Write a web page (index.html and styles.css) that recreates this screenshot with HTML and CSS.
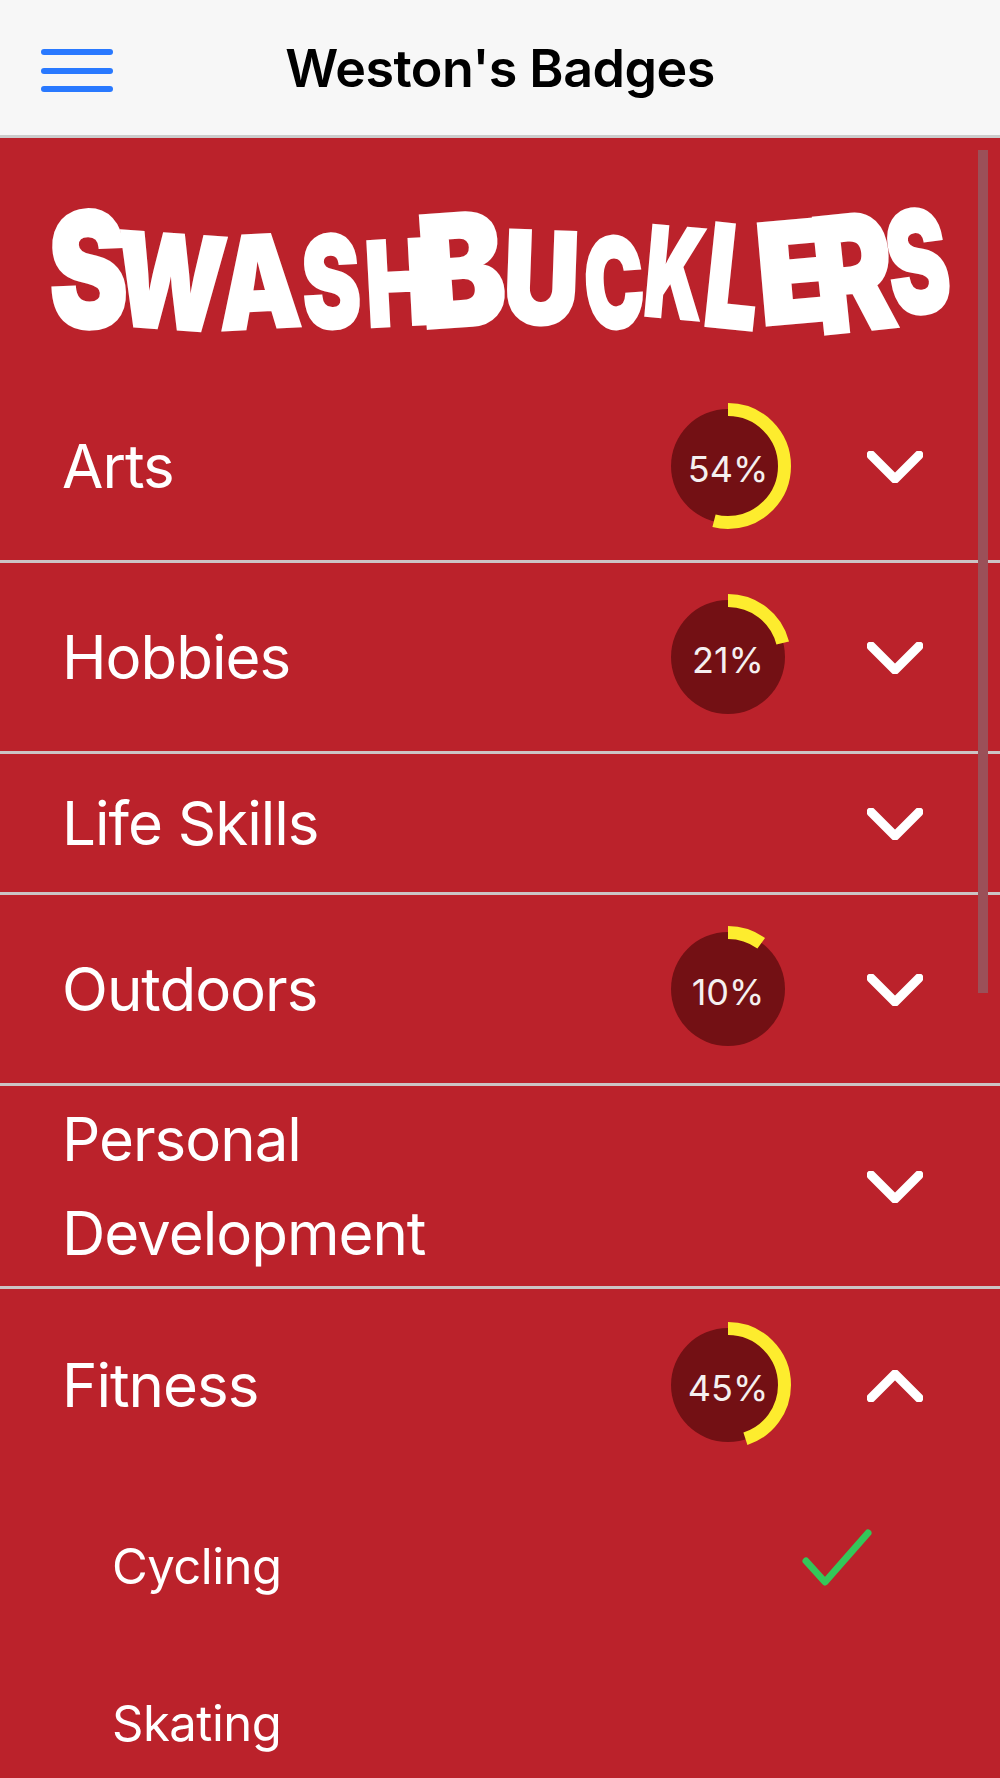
FILE: index.html
```html
<!DOCTYPE html>
<html lang="en">

<head>
     <meta charset="UTF-8">
     <meta name="viewport" content="width=device-width, initial-scale=1.0">
     <title>Weston's Badges</title>
     <link rel="stylesheet" href="styles.css">
</head>

<body>

     <header class="top-bar">
          <button class="menu-btn" aria-label="Menu">
               <span></span>
               <span></span>
               <span></span>
          </button>
          <h1 class="top-title">Weston's Badges</h1>
     </header>

     <main class="content">
          <div class="scroll-thumb"></div>

          <div class="logo" aria-label="Swashbucklers">
               <span class="letter l1">S</span><span class="letter l2">W</span><span class="letter l3">A</span><span class="letter l4">S</span><span class="letter l5">H</span><span class="letter l6">B</span><span class="letter l7">U</span><span class="letter l8">C</span><span class="letter l9">K</span><span class="letter l10">L</span><span class="letter l11">E</span><span class="letter l12">R</span><span class="letter l13">S</span>
          </div>

          <div class="category">
               <span class="category-name">Arts</span>
               <div class="ring">
                    <svg viewBox="0 0 126 126" width="126" height="126">
                         <circle class="ring-bg" cx="63" cy="63" r="57"></circle>
                         <circle class="ring-arc" cx="63" cy="63" r="56.5" pathLength="100" stroke-dasharray="54 100"></circle>
                    </svg>
                    <span class="ring-label">54%</span>
               </div>
               <svg class="chevron" viewBox="0 0 56 32" width="56" height="32">
                    <path d="M4 4 L28 28 L52 4"></path>
               </svg>
          </div>

          <div class="category">
               <span class="category-name">Hobbies</span>
               <div class="ring">
                    <svg viewBox="0 0 126 126" width="126" height="126">
                         <circle class="ring-bg" cx="63" cy="63" r="57"></circle>
                         <circle class="ring-arc" cx="63" cy="63" r="56.5" pathLength="100" stroke-dasharray="21 100"></circle>
                    </svg>
                    <span class="ring-label">21%</span>
               </div>
               <svg class="chevron" viewBox="0 0 56 32" width="56" height="32">
                    <path d="M4 4 L28 28 L52 4"></path>
               </svg>
          </div>

          <div class="category category-short">
               <span class="category-name">Life Skills</span>
               <svg class="chevron" viewBox="0 0 56 32" width="56" height="32">
                    <path d="M4 4 L28 28 L52 4"></path>
               </svg>
          </div>

          <div class="category">
               <span class="category-name">Outdoors</span>
               <div class="ring">
                    <svg viewBox="0 0 126 126" width="126" height="126">
                         <circle class="ring-bg" cx="63" cy="63" r="57"></circle>
                         <circle class="ring-arc" cx="63" cy="63" r="56.5" pathLength="100" stroke-dasharray="10 100"></circle>
                    </svg>
                    <span class="ring-label">10%</span>
               </div>
               <svg class="chevron" viewBox="0 0 56 32" width="56" height="32">
                    <path d="M4 4 L28 28 L52 4"></path>
               </svg>
          </div>

          <div class="category category-tall">
               <span class="category-name">Personal<br>Development</span>
               <svg class="chevron" viewBox="0 0 56 32" width="56" height="32">
                    <path d="M4 4 L28 28 L52 4"></path>
               </svg>
          </div>

          <div class="category category-open">
               <span class="category-name">Fitness</span>
               <div class="ring">
                    <svg viewBox="0 0 126 126" width="126" height="126">
                         <circle class="ring-bg" cx="63" cy="63" r="57"></circle>
                         <circle class="ring-arc" cx="63" cy="63" r="56.5" pathLength="100" stroke-dasharray="45 100"></circle>
                    </svg>
                    <span class="ring-label">45%</span>
               </div>
               <svg class="chevron" viewBox="0 0 56 32" width="56" height="32">
                    <path d="M4 28 L28 4 L52 28"></path>
               </svg>
          </div>

          <div class="badge-row">
               <span class="badge-name">Cycling</span>
               <svg class="check" viewBox="0 0 70 58" width="70" height="58">
                    <path d="M4 32 L23 53 L66 4"></path>
               </svg>
          </div>

          <div class="badge-row">
               <span class="badge-name">Skating</span>
          </div>
     </main>

</body>

</html>
```

FILE: styles.css
```css
* {
     padding: 0;
     margin: 0;
     box-sizing: border-box;
     font-family: Inter, 'Noto Sans', sans-serif;
}

html,
body {
     width: 100%;
     height: 100%;
     overflow: hidden;
     background: rgb(187, 34, 43);
}

.top-bar {
     height: 138px;
     display: flex;
     align-items: center;
     justify-content: center;
     background: rgb(247, 247, 247);
     border-bottom: 3px solid rgb(204, 204, 204);
     position: relative;
}

.menu-btn {
     position: absolute;
     left: 41px;
     top: 49px;
     width: 72px;
     height: 43px;
     display: flex;
     flex-direction: column;
     justify-content: space-between;
     border: none;
     background: none;
}

.menu-btn span {
     display: block;
     height: 6px;
     border-radius: 3px;
     background: rgb(41, 121, 255);
}

.top-title {
     font-size: 52px;
     font-weight: 600;
     letter-spacing: -.5px;
     color: rgb(0, 0, 0);
     margin-top: 2px;
}

.content {
     position: relative;
     color: white;
}

.scroll-thumb {
     position: absolute;
     left: 978px;
     top: 12px;
     width: 10px;
     height: 843px;
     background: rgb(155, 80, 88);
}

/* logo */
.logo {
     height: 234px;
     padding-left: 49px;
     padding-top: 30px;
     display: flex;
     align-items: center;
}

.letter {
     height: 120px;
     display: flex;
     align-items: center;
     justify-content: center;
     font-size: 100px;
     font-weight: 900;
     line-height: 1;
     color: white;
     -webkit-text-stroke: 2px white;
}

.l1 { width: 78px; transform: translateY(0px) rotate(-2deg) scale(1.18, 1.6); }
.l2 { width: 109px; margin-left: -11px; transform: translateY(12px) rotate(4deg) scale(1.02, 1.3); }
.l3 { width: 82px; margin-left: -7px; transform: translateY(12px) rotate(-3deg) scale(1.04, 1.28); }
.l4 { width: 62px; transform: translateY(12px) rotate(-3deg) scale(.88, 1.28); }
.l5 { width: 74px; transform: translateY(13px) rotate(-3deg) scale(.9, 1.18); }
.l6 { width: 97px; margin-left: -23px; transform: translateY(0px) rotate(-4deg) scale(1.3, 1.55); }
.l7 { width: 83px; margin-left: -10px; transform: translateY(8px) rotate(2deg) scale(1.05, 1.28); }
.l8 { width: 62px; transform: translateY(13px) rotate(-4deg) scale(.8, 1.25); }
.l9 { width: 60px; transform: translateY(3px) rotate(5deg) scale(.78, 1.25); }
.l10 { width: 60px; margin-left: -2px; transform: translateY(7px) rotate(6deg) scale(.95, 1.42); }
.l11 { width: 91px; margin-left: -11px; transform: translateY(2px) rotate(-5deg) scale(1.35, 1.4); }
.l12 { width: 87px; margin-left: -33px; transform: translateY(3px) rotate(-6deg) scale(1.2, 1.6); }
.l13 { width: 65px; margin-left: -12px; transform: translateY(-8px) rotate(-8deg) scale(.92, 1.42); }

/* category rows */
.category {
     height: 191px;
     padding: 0 77px 0 62px;
     display: grid;
     grid-template-columns: 1fr 126px 56px;
     column-gap: 76px;
     align-items: center;
     border-bottom: 3px solid rgb(204, 196, 197);
}

.category-short {
     height: 141px;
}

.category-tall {
     height: 203px;
}

.category-open {
     height: 199px;
     padding-bottom: 8px;
     border-bottom: none;
}

.category-name {
     grid-column: 1;
     font-size: 60px;
     line-height: 94px;
     letter-spacing: -1px;
}

.ring {
     grid-column: 2;
     display: grid;
     place-items: center;
     width: 126px;
     height: 126px;
}

.ring svg,
.ring-label {
     grid-area: 1 / 1;
}

.ring-bg {
     fill: rgb(115, 16, 20);
}

.ring-arc {
     fill: none;
     stroke: rgb(253, 236, 46);
     stroke-width: 13;
     transform: rotate(-90deg);
     transform-origin: 63px 63px;
}

.ring-label {
     font-size: 36px;
     margin-top: 6px;
     color: rgb(245, 240, 240);
}

.chevron {
     grid-column: 3;
     margin-top: 2px;
     fill: none;
     stroke: white;
     stroke-width: 9;
     stroke-linecap: round;
     stroke-linejoin: round;
}

/* badges inside an open category */
.badge-row {
     height: 157px;
     padding: 0 128px 0 112px;
     display: flex;
     align-items: center;
     justify-content: space-between;
}

.badge-name {
     font-size: 49px;
     letter-spacing: -.5px;
}

.check {
     margin-bottom: 18px;
     fill: none;
     stroke: rgb(52, 199, 89);
     stroke-width: 7;
     stroke-linecap: round;
     stroke-linejoin: round;
}
```
